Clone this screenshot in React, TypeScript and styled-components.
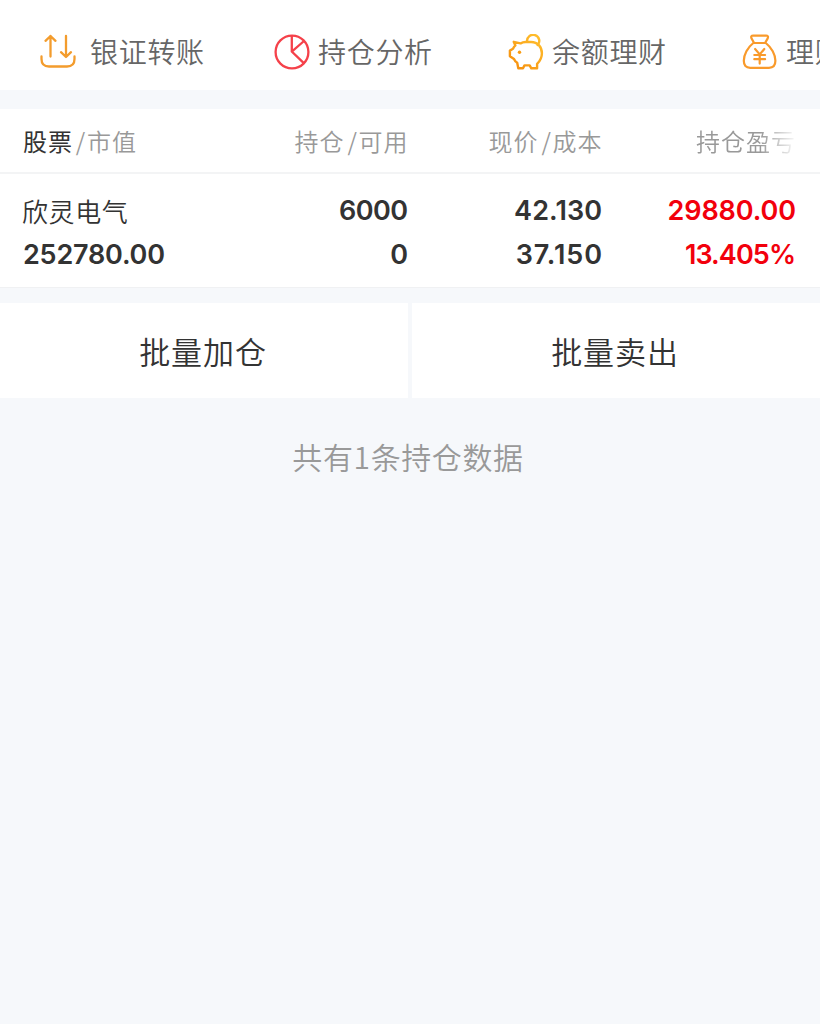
import React from "react";
import styled, { createGlobalStyle } from "styled-components";

const GlobalStyle = createGlobalStyle`
  * { box-sizing: border-box; }
  html, body { margin: 0; padding: 0; background: #f6f8fb; }
  body { font-family: "Noto Sans CJK SC", sans-serif; overflow: hidden; }
`;

const Screen = styled.main`
  width: 820px;
  height: 1024px;
  overflow: hidden;
  background: #f6f8fb;
  color: #333;
`;

const Toolbar = styled.nav`
  display: flex;
  height: 90px;
  padding: 14px 0 0 40px;
  background: #fff;
  overflow: hidden;
`;

const Tool = styled.a<{ $gap: number; $width: number }>`
  flex: 0 0 ${(p) => p.$width}px;
  display: flex;
  align-items: center;
  height: 76px;
  gap: ${(p) => p.$gap}px;
  font-size: 28px;
  font-weight: 350;
  letter-spacing: 0.7px;
  line-height: 40px;
  color: #666;
  white-space: nowrap;
  svg { flex: none; margin-bottom: 1px; }
  span { margin-bottom: 2px; }
`;

const Card = styled.section`
  margin-top: 19px;
  height: 179px;
  background: #fff;
  border-bottom: 1px solid #f0f1f3;
`;

const Row = styled.div`
  display: grid;
  grid-template-columns: 196px 189px 194px 194px;
  padding: 0 24px 0 23px;
`;

const HeadRow = styled(Row)`
  height: 65px;
  align-items: center;
  border-bottom: 2px solid #f3f4f5;
  font-size: 24px;
  font-weight: 350;
  letter-spacing: 1px;
  line-height: 36px;
  color: #999;
`;

const HeadCell = styled.div<{ $left?: boolean; $fade?: boolean }>`
  text-align: ${(p) => (p.$left ? "left" : "right")};
  margin-right: ${(p) => (p.$left || p.$fade ? 0 : -0.6)}px;
  white-space: nowrap;
  ${(p) => p.$fade && "mask-image: linear-gradient(to right, #000 158px, transparent 196px);"}
`;

const Strong = styled.b`
  font-weight: 400;
  color: #333;
`;

const Slash = styled.i`
  display: inline-block;
  width: 14px;
  padding-left: 2px;
  font-style: normal;
  text-align: center;
`;

const DataRow = styled(Row)`
  padding-top: 15px;
`;

const Cell = styled.div<{ $left?: boolean; $red?: boolean }>`
  display: flex;
  flex-direction: column;
  align-items: ${(p) => (p.$left ? "flex-start" : "flex-end")};
  font-family: Inter, "Noto Sans CJK SC", sans-serif;
  font-size: 27px;
  font-weight: 580;
  line-height: 43.5px;
  color: ${(p) => (p.$red ? "#f2000c" : "#333")};
  white-space: nowrap;
`;

const Num = styled.span<{ $track?: number }>`
  letter-spacing: ${(p) => p.$track ?? 0}px;
  margin-right: ${(p) => -(p.$track ?? 0)}px;
`;

const StockName = styled.span`
  margin-left: -1px;
  font-family: "Noto Sans CJK SC", sans-serif;
  font-size: 26px;
  font-weight: 350;
  letter-spacing: 0.6px;
`;

const Actions = styled.div`
  display: grid;
  grid-template-columns: 408px 408px;
  gap: 4px;
  margin-top: 15px;
`;

const Action = styled.button`
  height: 95px;
  padding: 0 2px 1px 0;
  border: 0;
  background: #fff;
  font-family: inherit;
  font-size: 31px;
  font-weight: 350;
  letter-spacing: 0.9px;
  color: #333;
`;

const Summary = styled.p`
  margin: 35px 0 0;
  padding-right: 4px;
  text-align: center;
  font-size: 30px;
  font-weight: 350;
  letter-spacing: 0.6px;
  line-height: 46px;
  color: #999;
`;

const TransferIcon = () => (
  <svg width="36" height="36" viewBox="0 0 36 36" fill="none" stroke="#f39c2d" strokeWidth="2.3" strokeLinecap="round" strokeLinejoin="round">
    <path d="M10.5 22.5V2M5.5 6.8L10.5 2L15.5 6.8M26 2V22.5M21 18.2L26 23L31 18.2M1.5 22.5V25Q1.5 32.5 9 32.5H27Q34.5 32.5 34.5 25V22.5" />
  </svg>
);

const PieIcon = () => (
  <svg width="36" height="36" viewBox="0 0 36 36" fill="none" stroke="#f5414a" strokeWidth="2.3">
    <circle cx="18" cy="18" r="16.4" />
    <path d="M17.8 1.6V17.6L29.8 29.2M17.8 17.6L30 7" />
  </svg>
);

const PiggyIcon = () => (
  <svg width="36" height="36" viewBox="-0.5 0 36 36" fill="none" stroke="url(#pig)" strokeWidth="2.4" strokeLinejoin="round" strokeLinecap="round">
    <defs>
      <linearGradient id="pig" x1="0" y1="36" x2="30" y2="0" gradientUnits="userSpaceOnUse">
        <stop stopColor="#f58a0b" />
        <stop offset="1" stopColor="#ffc02e" />
      </linearGradient>
    </defs>
    <path d="M5.2 7.8L12 9.4Q14.2 8 17 8H22.5C29.5 8 33.4 13.2 33.4 19.2C33.4 24 31.4 27.2 28.6 29.8V34.3H22.8L21.2 31.4H16L14.5 34.3H9.8L8.7 28.8Q6.6 27.6 5.5 25L1.4 22.2V16.6L4.5 14.8Q5.4 12.8 6.9 11.4Z" />
    <path d="M18.6 7.5A6.1 6.1 0 1 1 29.2 11" />
    <circle cx="11" cy="18.3" r="1.7" fill="#f99c13" stroke="none" />
  </svg>
);

const MoneyBagIcon = () => (
  <svg width="36" height="36" viewBox="0 0 36 36" fill="none" stroke="#f99a2b" strokeWidth="2.2" strokeLinejoin="round" strokeLinecap="round">
    <path d="M12 8.8L9.5 4.4Q8.4 1.6 11.2 1.6H24Q26.8 1.6 25.7 4.4L23.2 8.8M11.3 9H23.8C29.5 13.5 33.4 20.7 33.4 26.8Q33.4 33.8 27 33.8H8.2Q1.8 33.8 1.8 26.8C1.8 20.7 5.6 13.5 11.3 9Z" />
    <path d="M13.1 15L17.7 20.4L22.3 15M12.3 21H23.1M12.3 25.2H23.1M17.7 20.5V29.6" />
  </svg>
);

const tools = [
  { label: "银证转账", icon: <TransferIcon />, gap: 14, width: 234 },
  { label: "持仓分析", icon: <PieIcon />, gap: 8, width: 234 },
  { label: "余额理财", icon: <PiggyIcon />, gap: 8, width: 234 },
  { label: "理财", icon: <MoneyBagIcon />, gap: 8, width: 234 },
];

export default function App() {
  return (
    <Screen>
      <GlobalStyle />
      <Toolbar>
        {tools.map((t) => (
          <Tool key={t.label} $gap={t.gap} $width={t.width}>
            {t.icon}
            <span>{t.label}</span>
          </Tool>
        ))}
      </Toolbar>
      <Card>
        <HeadRow>
          <HeadCell $left><Strong>股票</Strong><Slash>/</Slash>市值</HeadCell>
          <HeadCell>持仓<Slash>/</Slash>可用</HeadCell>
          <HeadCell>现价<Slash>/</Slash>成本</HeadCell>
          <HeadCell $fade>持仓盈亏</HeadCell>
        </HeadRow>
        <DataRow>
          <Cell $left><StockName>欣灵电气</StockName><Num $track={-0.2}>252780.00</Num></Cell>
          <Cell><Num $track={-0.6}>6000</Num><Num>0</Num></Cell>
          <Cell><Num $track={0.1}>42.130</Num><Num $track={0.9}>37.150</Num></Cell>
          <Cell $red><Num $track={-0.1}>29880.00</Num><Num $track={-0.9}>13.405%</Num></Cell>
        </DataRow>
      </Card>
      <Actions>
        <Action>批量加仓</Action>
        <Action>批量卖出</Action>
      </Actions>
      <Summary>共有1条持仓数据</Summary>
    </Screen>
  );
}
